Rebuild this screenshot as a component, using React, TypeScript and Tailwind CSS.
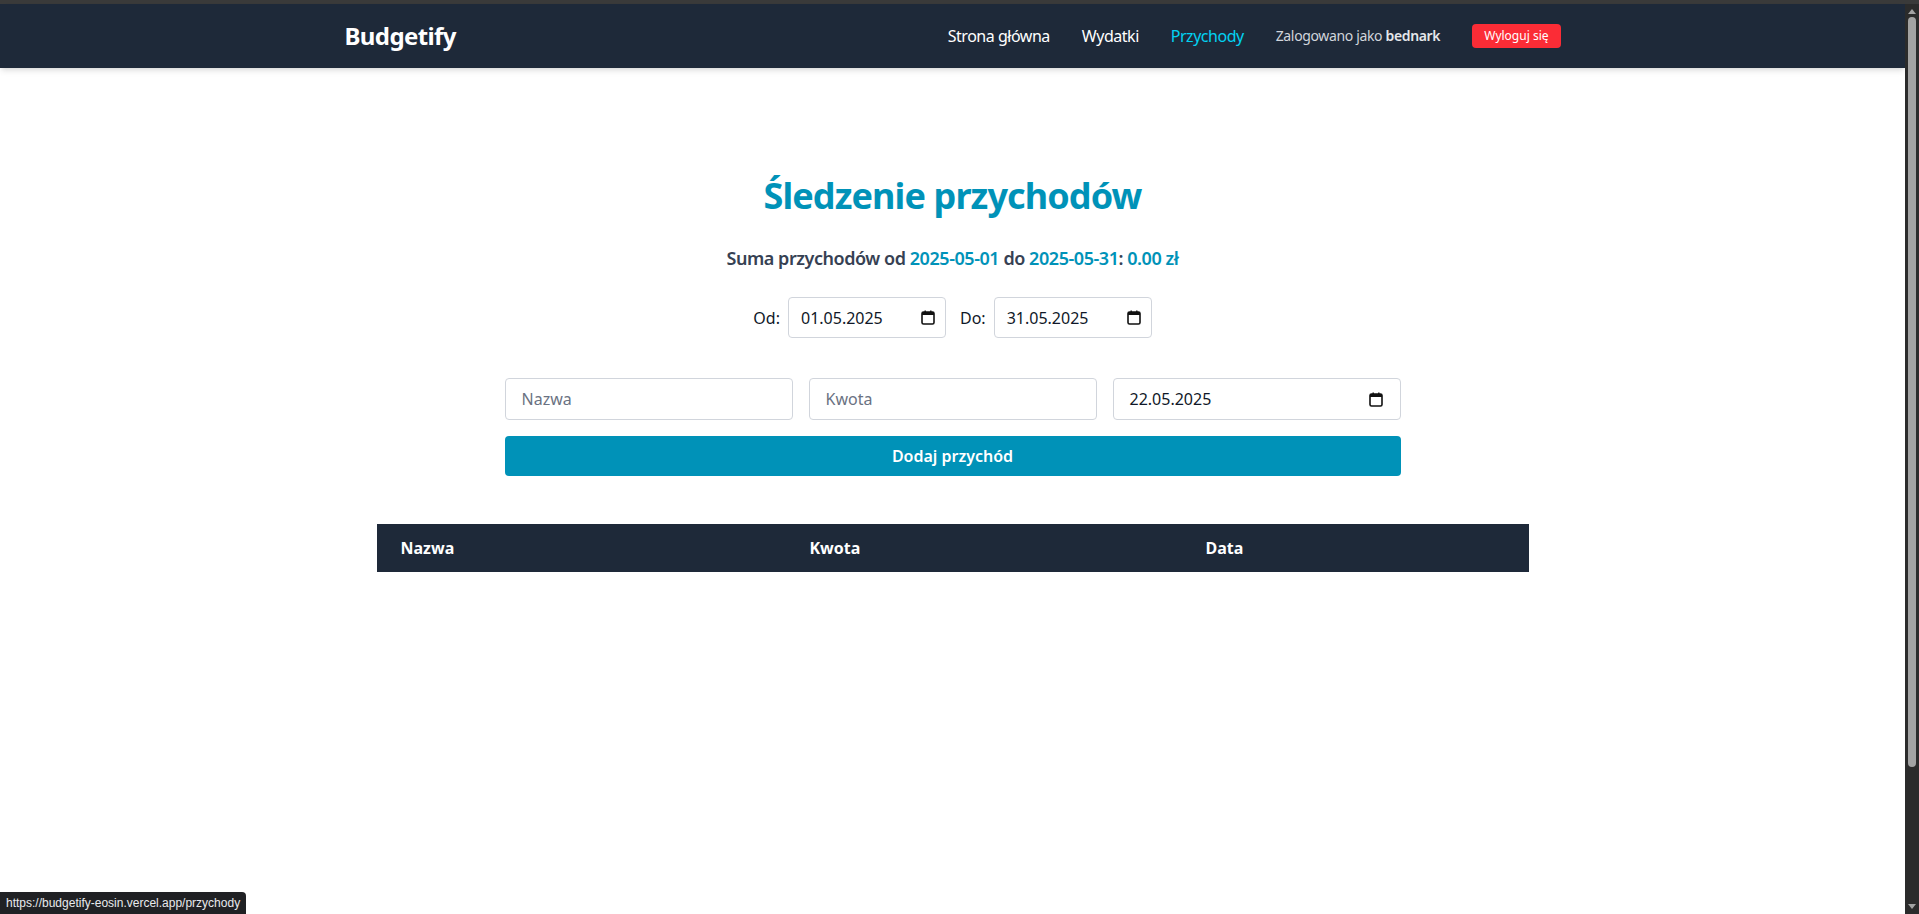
import {useState} from "react";

function CalendarIcon() {
	return (
		<svg width="14" height="15" viewBox="0 0 14 15" className="shrink-0">
			<rect x="1" y="2" width="12" height="12" rx="1.5" fill="none" stroke="#111" strokeWidth="1.6" />
			<rect x="1" y="2" width="12" height="3" fill="#111" />
			<rect x="3.5" y="0.5" width="1.4" height="2.5" fill="#111" />
			<rect x="9.1" y="0.5" width="1.4" height="2.5" fill="#111" />
		</svg>
	);
}

function DateBox({value, className}: {value: string; className: string}) {
	return (
		<div className={`flex items-center justify-between border border-gray-300 rounded bg-white text-gray-900 ${className}`}>
			<span>{value}</span>
			<CalendarIcon />
		</div>
	);
}

export default function App() {
	const [name, setName] = useState("");
	const [amount, setAmount] = useState("");

	return (
		<div className="h-screen overflow-hidden flex flex-col bg-white font-['Noto_Sans',sans-serif] relative">
			{/* window frame strip */}
			<div className="h-[4px] bg-[#3a3a3a] shrink-0" />

			<div className="flex flex-1 min-h-0">
				<div className="flex-1 min-w-0">
					{/* Navbar */}
					<nav className="bg-gray-800 shadow-md h-[64px]">
						<div className="max-w-7xl mx-auto px-8 h-full flex items-center justify-between">
							<span className="text-white text-2xl font-bold tracking-tight">Budgetify</span>
							<div className="flex items-center gap-8">
								<a className="text-white text-base tracking-[-0.03em]">Strona główna</a>
								<a className="text-white text-base tracking-[-0.03em]">Wydatki</a>
								<a className="text-cyan-400 text-base tracking-[-0.03em]">Przychody</a>
								<span className="text-gray-300 text-sm tracking-tight">
									Zalogowano jako <span className="font-semibold text-gray-200">bednark</span>
								</span>
								<button className="bg-red-500 text-white text-xs px-3 py-1 rounded">Wyloguj się</button>
							</div>
						</div>
					</nav>

					{/* Main */}
					<main className="pt-[108px] flex flex-col items-center">
						<h1 className="text-4xl font-bold text-cyan-600 tracking-tight">Śledzenie przychodów</h1>

						<p className="mt-[28px] text-lg font-semibold text-gray-700 tracking-tight">
							Suma przychodów od <span className="text-cyan-600">2025-05-01</span> do{" "}
							<span className="text-cyan-600">2025-05-31</span>: <span className="text-cyan-600">0.00 zł</span>
						</p>

						<div className="mt-[25px] flex items-center gap-[14px] text-gray-900">
							<label className="flex items-center gap-2">
								Od:
								<DateBox value="01.05.2025" className="w-[158px] h-[41px] pl-3 pr-[10px]" />
							</label>
							<label className="flex items-center gap-2">
								Do:
								<DateBox value="31.05.2025" className="w-[158px] h-[41px] pl-3 pr-[10px]" />
							</label>
						</div>

						{/* Form */}
						<div className="mt-10 w-full max-w-4xl grid grid-cols-3 gap-4">
							<input
								value={name}
								onChange={(e) => setName(e.target.value)}
								placeholder="Nazwa"
								className="border border-gray-300 rounded px-4 h-[42px] text-gray-900 placeholder:text-gray-500 outline-none"
							/>
							<input
								value={amount}
								onChange={(e) => setAmount(e.target.value)}
								placeholder="Kwota"
								className="border border-gray-300 rounded px-4 h-[42px] text-gray-900 placeholder:text-gray-500 outline-none"
							/>
							<DateBox value="22.05.2025" className="h-[42px] pl-4 pr-[17px]" />
							<button className="col-span-3 h-[40px] bg-cyan-600 text-white font-semibold rounded">
								Dodaj przychód
							</button>
						</div>

						{/* Table */}
						<div className="mt-12 w-full max-w-6xl">
							<table className="w-full table-fixed">
								<thead className="bg-gray-800 text-white">
									<tr>
										<th className="w-[409px] px-6 py-3 text-left font-bold">Nazwa</th>
										<th className="w-[396px] px-6 py-3 text-left font-bold">Kwota</th>
										<th className="px-6 py-3 text-left font-bold">Data</th>
									</tr>
								</thead>
								<tbody />
							</table>
						</div>
					</main>
				</div>

				{/* scrollbar */}
				<div className="w-[14px] shrink-0 bg-[#2b2b2b] flex flex-col items-center py-[2px]">
					<div className="w-0 h-0 border-x-[4px] border-x-transparent border-b-[5px] border-b-[#a3a3a3] mt-[3px]" />
					<div className="w-[8px] h-[750px] bg-[#a3a3a3] rounded-full mt-[3px]" />
					<div className="flex-1" />
					<div className="w-0 h-0 border-x-[4px] border-x-transparent border-t-[5px] border-t-[#a3a3a3] mb-[3px]" />
				</div>
			</div>

			{/* status bubble */}
			<div className="absolute left-0 bottom-0 bg-[#202124] text-[#e8eaed] text-xs font-['Liberation_Sans',sans-serif] px-[6px] py-[3px] rounded-tr">
				https://budgetify-eosin.vercel.app/przychody
			</div>
		</div>
	);
}
